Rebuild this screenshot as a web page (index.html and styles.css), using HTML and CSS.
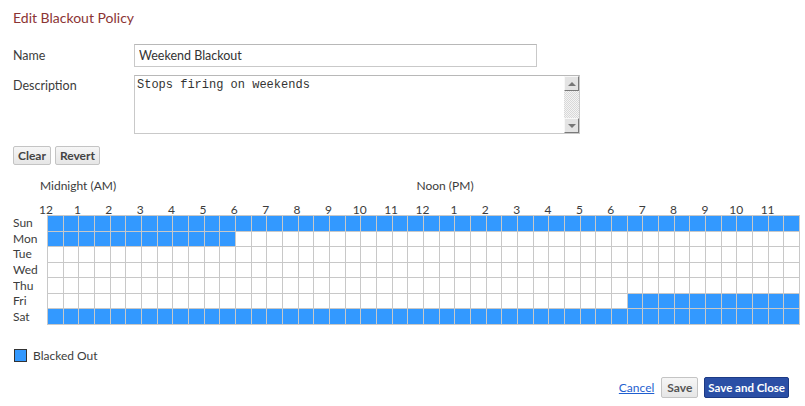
FILE: index.html
```html
<!DOCTYPE html>
<html lang="en">

<head>
    <meta charset="UTF-8">
    <meta name="viewport" content="width=device-width, initial-scale=1.0">
    <title>Edit Blackout Policy</title>
    <link rel="stylesheet" href="styles.css">
</head>

<body>
    <div class="page">
        <h1 class="title">Edit Blackout Policy</h1>

        <div class="field-row">
            <label class="field-label" for="policyName">Name</label>
            <input id="policyName" class="text-input" type="text" value="Weekend Blackout">
        </div>

        <div class="field-row field-row-top">
            <label class="field-label" for="policyDesc">Description</label>
            <div class="desc-box">
                <textarea id="policyDesc" class="desc-text">Stops firing on weekends</textarea>
                <div class="scrollbar">
                    <div class="scroll-btn"><span class="arrow arrow-up"></span></div>
                    <div class="scroll-track"></div>
                    <div class="scroll-btn"><span class="arrow arrow-down"></span></div>
                </div>
            </div>
        </div>

        <div class="tools">
            <button class="btn">Clear</button>
            <button class="btn">Revert</button>
        </div>

        <!-- weekly schedule grid -->
        <div class="schedule">
            <div class="period-row">
                <span class="period">Midnight (AM)</span>
                <span class="period">Noon (PM)</span>
            </div>
            <div class="hours-row" id="hoursRow"></div>
            <div class="day-labels" id="dayLabels"></div>
            <div class="cells" id="cells"></div>
        </div>

        <div class="legend">
            <span class="legend-swatch"></span>
            <span>Blacked Out</span>
        </div>

        <div class="actions">
            <a href="#" class="cancel-link">Cancel</a>
            <button class="btn btn-save">Save</button>
            <button class="btn btn-primary">Save and Close</button>
        </div>
    </div>

    <script>
        const days = ['Sun', 'Mon', 'Tue', 'Wed', 'Thu', 'Fri', 'Sat'];
        // blacked out half-hour slots per day: [start, end)
        const blackout = {
            Sun: [0, 48],
            Mon: [0, 12],
            Fri: [37, 48],
            Sat: [0, 48]
        };

        // hour labels
        const hoursRow = document.getElementById('hoursRow');
        for (let i = 0; i < 24; i++) {
            const h = document.createElement('span');
            h.className = 'hour';
            h.textContent = (i % 12 === 0) ? 12 : i % 12;
            hoursRow.appendChild(h);
        }

        // day labels + cells
        const dayLabels = document.getElementById('dayLabels');
        const cells = document.getElementById('cells');
        days.forEach(day => {
            const label = document.createElement('span');
            label.className = 'day';
            label.textContent = day;
            dayLabels.appendChild(label);

            const range = blackout[day];
            for (let slot = 0; slot < 48; slot++) {
                const cell = document.createElement('div');
                cell.className = 'cell';
                if (range && slot >= range[0] && slot < range[1]) {
                    cell.classList.add('on');
                }
                cells.appendChild(cell);
            }
        });
    </script>
</body>

</html>
```

FILE: styles.css
```css
body {
    font-family: Lato, "Liberation Sans", sans-serif;
    font-size: 12px;
    color: #3c3c3c;
    margin: 0;
    padding: 0;
    background-color: #fff;
}

.page {
    padding: 9px 16px 0 13px;
}

.title {
    font-size: 14px;
    font-weight: normal;
    line-height: 18px;
    color: #8b3434;
    margin: 0 0 17px 0;
}

.field-row {
    display: flex;
    align-items: center;
    margin-bottom: 8px;
}

.field-row-top {
    align-items: flex-start;
}

.field-label {
    width: 121px;
    font-size: 12.5px;
    line-height: 16px;
}

.field-row-top .field-label {
    padding-top: 3px;
}

.text-input {
    width: 403px;
    height: 23px;
    box-sizing: border-box;
    border: 1px solid #c9c9c9;
    border-top-color: #b8b8b8;
    padding: 0 4px;
    font-family: Lato, "Liberation Sans", sans-serif;
    font-size: 12.5px;
    color: #333;
    outline: none;
}

.desc-box {
    display: flex;
    width: 446px;
    height: 59px;
    box-sizing: border-box;
    border: 1px solid #c9c9c9;
    border-top-color: #b8b8b8;
}

.desc-text {
    flex: 1;
    border: none;
    resize: none;
    outline: none;
    padding: 2px 2px;
    font-family: "Liberation Mono", monospace;
    font-size: 12px;
    color: #333;
    overflow: hidden;
}

.scrollbar {
    width: 15px;
    display: flex;
    flex-direction: column;
}

.scroll-btn {
    height: 15px;
    box-sizing: border-box;
    background-color: #e4e4e4;
    border-top: 1px solid #f8f8f8;
    border-left: 1px solid #f8f8f8;
    border-right: 1px solid #7a7a7a;
    border-bottom: 1px solid #7a7a7a;
    display: flex;
    align-items: center;
    justify-content: center;
}

.arrow {
    width: 0;
    height: 0;
    border-left: 4px solid transparent;
    border-right: 4px solid transparent;
}

.arrow-up {
    border-bottom: 4px solid #777;
}

.arrow-down {
    border-top: 4px solid #777;
}

.scroll-track {
    flex: 1;
    background: repeating-conic-gradient(#d8d8d8 0 25%, #f4f4f4 0 50%) 0 0 / 2px 2px;
}

.tools {
    display: flex;
    gap: 4px;
    margin-top: 12px;
}

.btn {
    font-family: Lato, "Liberation Sans", sans-serif;
    font-size: 12px;
    font-weight: bold;
    color: #444;
    background: linear-gradient(#f6f6f6, #e6e6e6);
    border: 1px solid #c4c4c4;
    border-radius: 2px;
    height: 19px;
    padding: 0 4px;
    cursor: pointer;
}

.schedule {
    display: grid;
    grid-template-columns: 34px 753px;
    margin-top: 13px;
}

.period-row {
    grid-column: 2;
    display: grid;
    grid-template-columns: 1fr 1fr;
    line-height: 16px;
}

.period {
    margin-left: -7px;
}

.hours-row {
    grid-column: 2;
    display: grid;
    grid-template-columns: repeat(24, 1fr);
    margin-top: 10px;
    height: 11px;
    line-height: 11px;
}

.hour {
    justify-self: start;
    transform: translateX(calc(-50% - 1px));
}

.day-labels {
    grid-column: 1;
    display: grid;
    grid-template-rows: repeat(7, 1fr);
    gap: 1px;
    padding: 1px 0;
    height: 110px;
    box-sizing: border-box;
    align-items: center;
}

.day {
    line-height: 14px;
}

.cells {
    grid-column: 2;
    display: grid;
    grid-template-columns: repeat(48, 1fr);
    grid-template-rows: repeat(7, 1fr);
    gap: 1px;
    padding: 1px;
    height: 110px;
    box-sizing: border-box;
    background-color: #c8c8c8;
}

.cell {
    background-color: #fff;
}

.cell.on {
    background-color: #3399ff;
}

.legend {
    display: flex;
    align-items: center;
    gap: 6px;
    margin-top: 23px;
    padding-left: 1px;
}

.legend-swatch {
    width: 11px;
    height: 11px;
    background-color: #3399ff;
    border: 1px solid #333;
}

.actions {
    display: flex;
    justify-content: flex-end;
    align-items: center;
    gap: 6px;
    margin-top: 14px;
}

.actions .btn {
    height: 21px;
}

.cancel-link {
    color: #1f5fd0;
    text-decoration: underline;
    margin-right: 1px;
}

.btn-save {
    padding: 0 5px;
    color: #555;
}

.btn-primary {
    font-size: 11.5px;
    padding: 0 3px;
    background: #2b4fa6;
    border-color: #1c3a85;
    color: #fff;
}
```
